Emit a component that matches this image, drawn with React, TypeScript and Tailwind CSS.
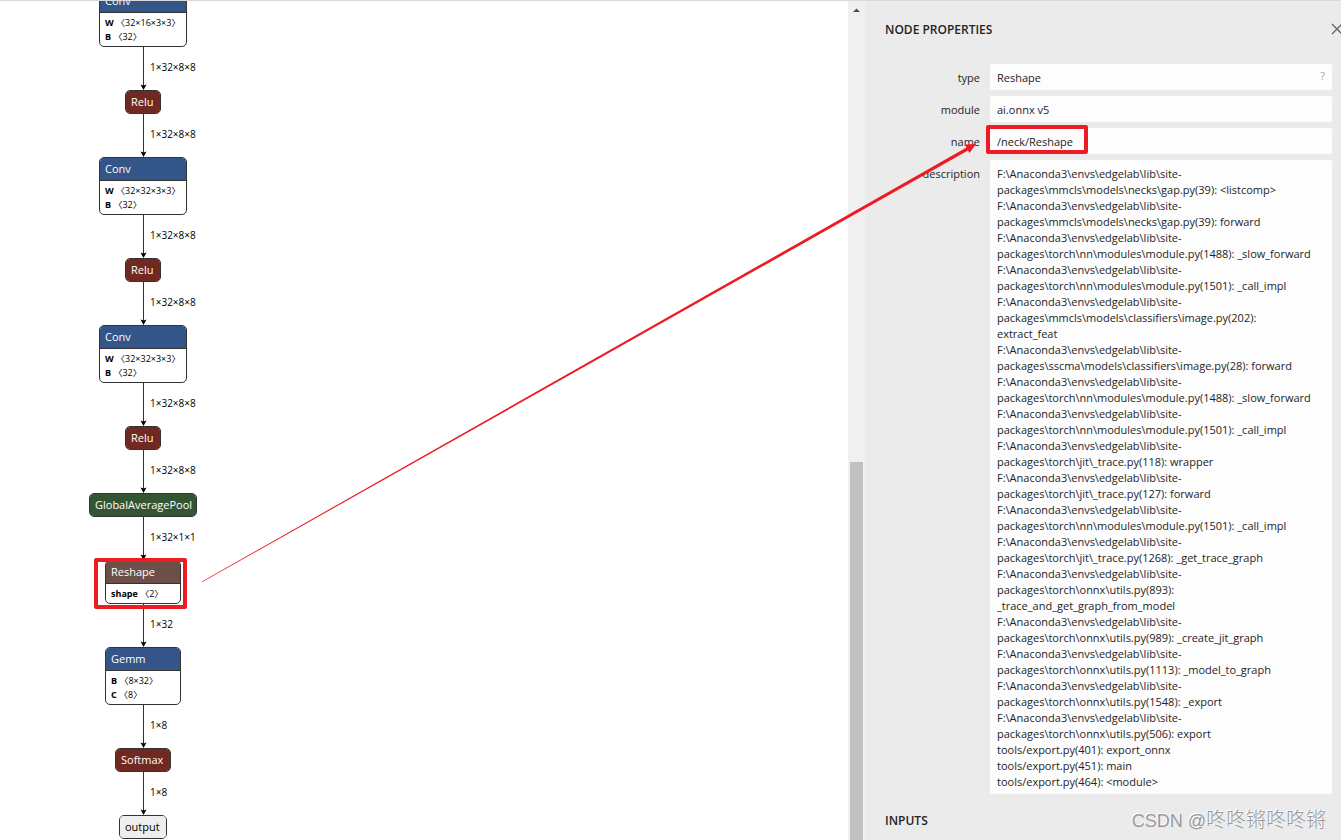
import type { ReactNode } from 'react'

type Arg = { name: string; shape: string }

const colors = {
  layer: 'bg-[#335588]',
  activation: 'bg-[#702921]',
  pool: 'bg-[#335533]',
  shape: 'bg-[#6c4f47]',
  io: 'bg-[#eeeeee]',
}

const convArgs: Arg[] = [
  { name: 'W', shape: '32×32×3×3' },
  { name: 'B', shape: '32' },
]

const description = [
  'F:\\Anaconda3\\envs\\edgelab\\lib\\site-',
  'packages\\mmcls\\models\\necks\\gap.py(39): <listcomp>',
  'F:\\Anaconda3\\envs\\edgelab\\lib\\site-',
  'packages\\mmcls\\models\\necks\\gap.py(39): forward',
  'F:\\Anaconda3\\envs\\edgelab\\lib\\site-',
  'packages\\torch\\nn\\modules\\module.py(1488): _slow_forward',
  'F:\\Anaconda3\\envs\\edgelab\\lib\\site-',
  'packages\\torch\\nn\\modules\\module.py(1501): _call_impl',
  'F:\\Anaconda3\\envs\\edgelab\\lib\\site-',
  'packages\\mmcls\\models\\classifiers\\image.py(202):',
  'extract_feat',
  'F:\\Anaconda3\\envs\\edgelab\\lib\\site-',
  'packages\\sscma\\models\\classifiers\\image.py(28): forward',
  'F:\\Anaconda3\\envs\\edgelab\\lib\\site-',
  'packages\\torch\\nn\\modules\\module.py(1488): _slow_forward',
  'F:\\Anaconda3\\envs\\edgelab\\lib\\site-',
  'packages\\torch\\nn\\modules\\module.py(1501): _call_impl',
  'F:\\Anaconda3\\envs\\edgelab\\lib\\site-',
  'packages\\torch\\jit\\_trace.py(118): wrapper',
  'F:\\Anaconda3\\envs\\edgelab\\lib\\site-',
  'packages\\torch\\jit\\_trace.py(127): forward',
  'F:\\Anaconda3\\envs\\edgelab\\lib\\site-',
  'packages\\torch\\nn\\modules\\module.py(1501): _call_impl',
  'F:\\Anaconda3\\envs\\edgelab\\lib\\site-',
  'packages\\torch\\jit\\_trace.py(1268): _get_trace_graph',
  'F:\\Anaconda3\\envs\\edgelab\\lib\\site-',
  'packages\\torch\\onnx\\utils.py(893):',
  '_trace_and_get_graph_from_model',
  'F:\\Anaconda3\\envs\\edgelab\\lib\\site-',
  'packages\\torch\\onnx\\utils.py(989): _create_jit_graph',
  'F:\\Anaconda3\\envs\\edgelab\\lib\\site-',
  'packages\\torch\\onnx\\utils.py(1113): _model_to_graph',
  'F:\\Anaconda3\\envs\\edgelab\\lib\\site-',
  'packages\\torch\\onnx\\utils.py(1548): _export',
  'F:\\Anaconda3\\envs\\edgelab\\lib\\site-',
  'packages\\torch\\onnx\\utils.py(506): export',
  'tools/export.py(401): export_onnx',
  'tools/export.py(451): main',
  'tools/export.py(464): <module>',
]

function Node({ title, color, width, args }: { title: string; color: string; width: string; args?: Arg[] }) {
  const text = color === colors.io ? 'text-black' : 'text-white'
  return (
    <div className={`${width} overflow-hidden rounded-[5px] border border-[#333] bg-white`}>
      <div className={`${color} ${text} h-[22px] whitespace-nowrap px-[5px] text-[11px] leading-[22px]`}>{title}</div>
      {args && (
        <ul className="border-t border-[#333] px-[5px] pb-[2px] pt-[3px] text-[9px] leading-[14px] text-black">
          {args.map((arg) => (
            <li key={arg.name} className="whitespace-nowrap">
              <b>{arg.name}</b> 〈{arg.shape}〉
            </li>
          ))}
        </ul>
      )}
    </div>
  )
}

function Edge({ label }: { label: string }) {
  return (
    <div className="grid h-[43px] w-full grid-cols-[1fr_8px_1fr] items-center">
      <svg className="col-start-2" width="8" height="43" viewBox="0 0 8 43">
        <path d="M4.5 0V39" stroke="#333" strokeWidth="1" />
        <path d="M1.5 37.5L4.5 38.5L7.5 37.5L4.5 43Z" fill="#000" />
      </svg>
      <span className="pb-[2px] pl-[3px] text-[10px] text-black">{label}</span>
    </div>
  )
}

function Graph() {
  return (
    <main className="min-w-0 flex-1 overflow-hidden bg-white">
      <div className="-mt-3 flex w-[286px] flex-col items-center">
        <Node title="Conv" color={colors.layer} width="w-[88px]" args={[{ name: 'W', shape: '32×16×3×3' }, { name: 'B', shape: '32' }]} />
        <Edge label="1×32×8×8" />
        <Node title="Relu" color={colors.activation} width="w-[36px]" />
        <Edge label="1×32×8×8" />
        <Node title="Conv" color={colors.layer} width="w-[88px]" args={convArgs} />
        <Edge label="1×32×8×8" />
        <Node title="Relu" color={colors.activation} width="w-[36px]" />
        <Edge label="1×32×8×8" />
        <Node title="Conv" color={colors.layer} width="w-[88px]" args={convArgs} />
        <Edge label="1×32×8×8" />
        <Node title="Relu" color={colors.activation} width="w-[36px]" />
        <Edge label="1×32×8×8" />
        <Node title="GlobalAveragePool" color={colors.pool} width="w-[108px]" />
        <Edge label="1×32×1×1" />
        <div className="relative">
          <Node title="Reshape" color={colors.shape} width="w-[76px]" args={[{ name: 'shape', shape: '2' }]} />
          <div className="absolute -bottom-[5px] -left-[11px] -right-[6px] -top-[2px] rounded-[2px] border-4 border-[#ed1c24]" />
        </div>
        <Edge label="1×32" />
        <Node title="Gemm" color={colors.layer} width="w-[76px]" args={[{ name: 'B', shape: '8×32' }, { name: 'C', shape: '8' }]} />
        <Edge label="1×8" />
        <Node title="Softmax" color={colors.activation} width="w-[56px]" />
        <Edge label="1×8" />
        <Node title="output" color={colors.io} width="w-[48px]" />
      </div>
    </main>
  )
}

function Scrollbar() {
  return (
    <div className="flex w-[17px] shrink-0 flex-col items-center bg-[#f0f0f0]">
      <svg width="17" height="17" viewBox="0 0 17 17">
        <path d="M5 11H12L8.5 7.5Z" fill="#505050" />
      </svg>
      <div className="mt-auto h-[45%] w-[13px] bg-[#c1c1c1]" />
    </div>
  )
}

function Row({ name, children }: { name: string; children: ReactNode }) {
  return (
    <div className="flex gap-[10px]">
      <dt className="w-[95px] pb-1 pt-[6px] text-right">{name}</dt>
      <dd className="relative min-w-0 flex-1 rounded-[2px] bg-[#fdfdfd] px-[7px] pb-1 pt-[6px]">{children}</dd>
    </div>
  )
}

function Sidebar() {
  return (
    <aside className="w-[476px] shrink-0 bg-[#ebebeb] pl-5 pr-[9px] text-[11px] leading-4 text-[#242424]">
      <div className="flex h-[63px] items-start justify-between pt-[21px]">
        <h1 className="text-[12px] font-semibold leading-4">NODE PROPERTIES</h1>
        <button type="button" aria-label="Close" className="-mr-[11px] pt-px">
          <svg width="12" height="12" viewBox="0 0 12 12">
            <path d="M1 1L11 11M11 1L1 11" stroke="#666" strokeWidth="1.4" />
          </svg>
        </button>
      </div>
      <dl className="flex flex-col gap-[6px]">
        <Row name="type">
          Reshape
          <button type="button" className="absolute right-[7px] top-1 text-[11px] text-[#aaa]">?</button>
        </Row>
        <Row name="module">ai.onnx v5</Row>
        <Row name="name">
          /neck/Reshape
          <span className="absolute -left-1 -top-[3px] h-[29px] w-[102px] rounded-[2px] border-4 border-[#ed1c24]" />
        </Row>
        <Row name="description">
          {description.map((line, i) => (
            <div key={i} className="whitespace-nowrap">{line}</div>
          ))}
        </Row>
      </dl>
      <h2 className="mt-[19px] text-[12px] font-semibold leading-4">INPUTS</h2>
    </aside>
  )
}

export default function App() {
  return (
    <div className="relative flex h-screen overflow-hidden border-t border-[#d9d9d9] font-['Open_Sans','Noto_Sans_CJK_SC',sans-serif]">
      <Graph />
      <Scrollbar />
      <Sidebar />

      {/* arrow from the Reshape node to its name */}
      <svg className="pointer-events-none absolute right-0 top-0" width="1341" height="840" viewBox="0 1 1341 840">
        <path d="M202 581.5L966.5 147.6L965 144.5L976 144L969.5 153L968 150.6L202 582.3Z" fill="#ed1c24" />
      </svg>

      <div className="absolute bottom-1 right-[15px] whitespace-nowrap font-['Liberation_Sans','Noto_Sans_CJK_SC',sans-serif] text-[20px] font-light leading-[30px] text-[#999] [text-shadow:-1px_-1px_0_#fff]">
        <span className="text-[18px]">CSDN @</span>咚咚锵咚咚锵
      </div>
    </div>
  )
}
